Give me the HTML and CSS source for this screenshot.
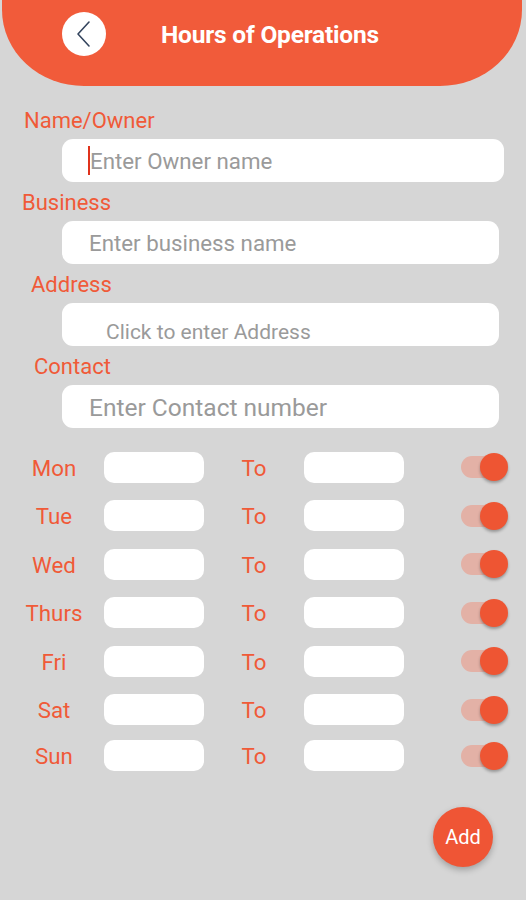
FILE: index.html
```html
<!DOCTYPE html>
<html>
<head>
<meta charset="utf-8">
<link rel="stylesheet" href="styles.css">
</head>
<body>
<div class="header">
  <div class="header-row">
    <div class="back">
      <svg width="44" height="44" viewBox="0 0 44 44"><polyline points="27,10 16,22 27,34" fill="none" stroke="#34455e" stroke-width="1.6" stroke-linecap="round" stroke-linejoin="round"/></svg>
    </div>
    <div class="title">Hours of Operations</div>
  </div>
</div>

<div class="form">
  <div class="label l-name">Name/Owner</div>
  <div class="field f-name"><span class="caret"></span>Enter Owner name</div>
  <div class="label l-biz">Business</div>
  <div class="field f-biz">Enter business name</div>
  <div class="label l-addr">Address</div>
  <div class="field f-addr">Click to enter Address</div>
  <div class="label l-contact">Contact</div>
  <div class="field f-contact">Enter Contact number</div>
</div>

<div class="days">
  <div class="day"><div class="dname">Mon</div><div class="box"></div><div class="to">To</div><div class="box"></div><div class="toggle"><span class="track"></span><span class="thumb"></span></div></div>
  <div class="day"><div class="dname">Tue</div><div class="box"></div><div class="to">To</div><div class="box"></div><div class="toggle"><span class="track"></span><span class="thumb"></span></div></div>
  <div class="day"><div class="dname">Wed</div><div class="box"></div><div class="to">To</div><div class="box"></div><div class="toggle"><span class="track"></span><span class="thumb"></span></div></div>
  <div class="day"><div class="dname">Thurs</div><div class="box"></div><div class="to">To</div><div class="box"></div><div class="toggle"><span class="track"></span><span class="thumb"></span></div></div>
  <div class="day"><div class="dname">Fri</div><div class="box"></div><div class="to">To</div><div class="box"></div><div class="toggle"><span class="track"></span><span class="thumb"></span></div></div>
  <div class="day"><div class="dname">Sat</div><div class="box"></div><div class="to">To</div><div class="box"></div><div class="toggle"><span class="track"></span><span class="thumb"></span></div></div>
  <div class="day last"><div class="dname">Sun</div><div class="box"></div><div class="to">To</div><div class="box"></div><div class="toggle"><span class="track"></span><span class="thumb"></span></div></div>
</div>

<div class="footer">
  <div class="add">Add</div>
</div>
</body>
</html>
```

FILE: styles.css
```css
* { box-sizing: border-box; }
html, body { margin: 0; padding: 0; }
body {
  width: 526px;
  height: 900px;
  background: #d6d6d6;
  font-family: Roboto, "Liberation Sans", sans-serif;
  overflow: hidden;
}
.header {
  margin: 0 4px 0 2px;
  height: 86px;
  background: #f15b3a;
  border-radius: 0 0 82px 82px / 0 0 76px 76px;
  padding-top: 12px;
}
.header-row {
  display: flex;
  align-items: center;
  height: 44px;
}
.back {
  margin-left: 60px;
  width: 44px;
  height: 44px;
  border-radius: 50%;
  background: #ffffff;
}
.back svg { display: block; }
.title {
  margin-left: 55px;
  color: #ffffff;
  font-weight: 700;
  font-size: 24.5px;
  letter-spacing: -0.2px;
}
.form {
  display: flex;
  flex-direction: column;
  padding-top: 22px;
}
.label {
  color: #f05a38;
  font-size: 22px;
  line-height: 24px;
  height: 24px;
  padding-top: 1px;
}
.l-name { margin-left: 24px; }
.l-biz { margin-left: 22px; margin-top: 8px; }
.l-addr { margin-left: 31px; margin-top: 8px; }
.l-contact { margin-left: 34px; margin-top: 8px; }
.field {
  margin-top: 7px;
  margin-left: 62px;
  height: 43px;
  background: #ffffff;
  border-radius: 11px;
  display: flex;
  align-items: center;
  padding-left: 27px;
  color: #9a9a9a;
  font-size: 22.3px;
}
.f-name { width: 442px; }
.f-biz { width: 437px; font-size: 22.3px; }
.f-addr { width: 437px; font-size: 21px; padding-left: 44px; padding-top: 14px; }
.f-contact { width: 437px; font-size: 24.5px; padding-top: 1px; }
.caret {
  display: inline-block;
  width: 2px;
  height: 29px;
  background: #e0321c;
  margin-left: -1px;
}
.days {
  display: flex;
  flex-direction: column;
  gap: 16.6px;
  margin-top: 23px;
}
.day {
  display: flex;
  align-items: center;
  height: 32px;
}
.day.last { margin-top: -3px; }
.dname {
  width: 88px;
  margin-left: 10px;
  margin-right: 6px;
  text-align: center;
  color: #f05a38;
  font-size: 22.3px;
  padding-top: 1px;
}
.box {
  width: 100px;
  height: 31px;
  background: #ffffff;
  border-radius: 10px;
}
.to {
  width: 100px;
  text-align: center;
  color: #f05a38;
  font-size: 22.3px;
  padding-top: 1px;
}
.toggle {
  position: relative;
  margin-left: 57px;
  width: 47px;
  height: 32px;
}
.track {
  position: absolute;
  left: 0;
  top: 5px;
  width: 40px;
  height: 22px;
  border-radius: 11px;
  background: #e3b1a6;
}
.thumb {
  position: absolute;
  left: 19px;
  top: 2px;
  width: 28px;
  height: 28px;
  border-radius: 50%;
  background: #ee5533;
  box-shadow: 0 2px 3px rgba(0,0,0,0.3);
}
.footer {
  display: flex;
  justify-content: flex-end;
  padding-right: 33px;
  margin-top: 35px;
}
.add {
  width: 60px;
  height: 60px;
  border-radius: 50%;
  background: #ef5535;
  color: #ffffff;
  font-size: 20px;
  display: flex;
  align-items: center;
  justify-content: center;
  box-shadow: 0 3px 6px rgba(0,0,0,0.25);
}
```
